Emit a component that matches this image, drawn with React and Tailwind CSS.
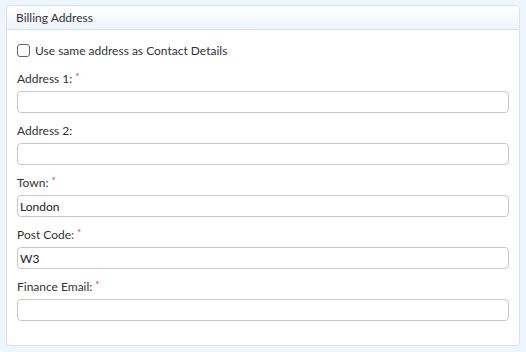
import React from 'react';

const fields = [
  { label: 'Address 1:', required: true, value: '' },
  { label: 'Address 2:', required: false, value: '' },
  { label: 'Town:', required: true, value: 'London' },
  { label: 'Post Code:', required: true, value: 'W3' },
  { label: 'Finance Email:', required: true, value: '' },
];

const Field = ({ label, required, value }) => (
  <div className="mt-[10px]">
    <label className="flex items-start h-[15px] text-[12px] leading-[15px] text-[#333]">
      {label}
      {required && <span className="ml-[3px] -mt-[1px] text-[10px] leading-[12px] text-[#e0383e]">*</span>}
    </label>
    <input
      defaultValue={value}
      className="mt-[5px] block w-full h-[22px] px-[2px] border border-[#c9c9c9] rounded-[4px] bg-white text-[12px] text-[#222] outline-none"
    />
  </div>
);

export default function App() {
  return (
    <div className="w-[526px] h-[352px] bg-[#eef5fe] pt-[5px] pl-[6px] pr-[6px] font-['Lato','Liberation_Sans',sans-serif]">
      <div className="bg-white border border-[#d5e5f7] rounded-[4px] h-[341px]">
        <div className="h-[24px] px-[9px] flex items-center border-b border-[#d5e5f7] rounded-t-[4px] bg-gradient-to-b from-white to-[#edf4fd] text-[12px] text-[#333]">
          Billing Address
        </div>
        <div className="px-[10px] flex flex-col">
          <label className="flex items-center gap-[5px] mt-[14px] mb-[4px] h-[13px] text-[12px] text-[#333]">
            <span className="w-[13px] h-[13px] border border-[#666] rounded-[3px] bg-white" />
            Use same address as Contact Details
          </label>
          {fields.map(f => <Field key={f.label} {...f} />)}
        </div>
      </div>
    </div>
  );
}
